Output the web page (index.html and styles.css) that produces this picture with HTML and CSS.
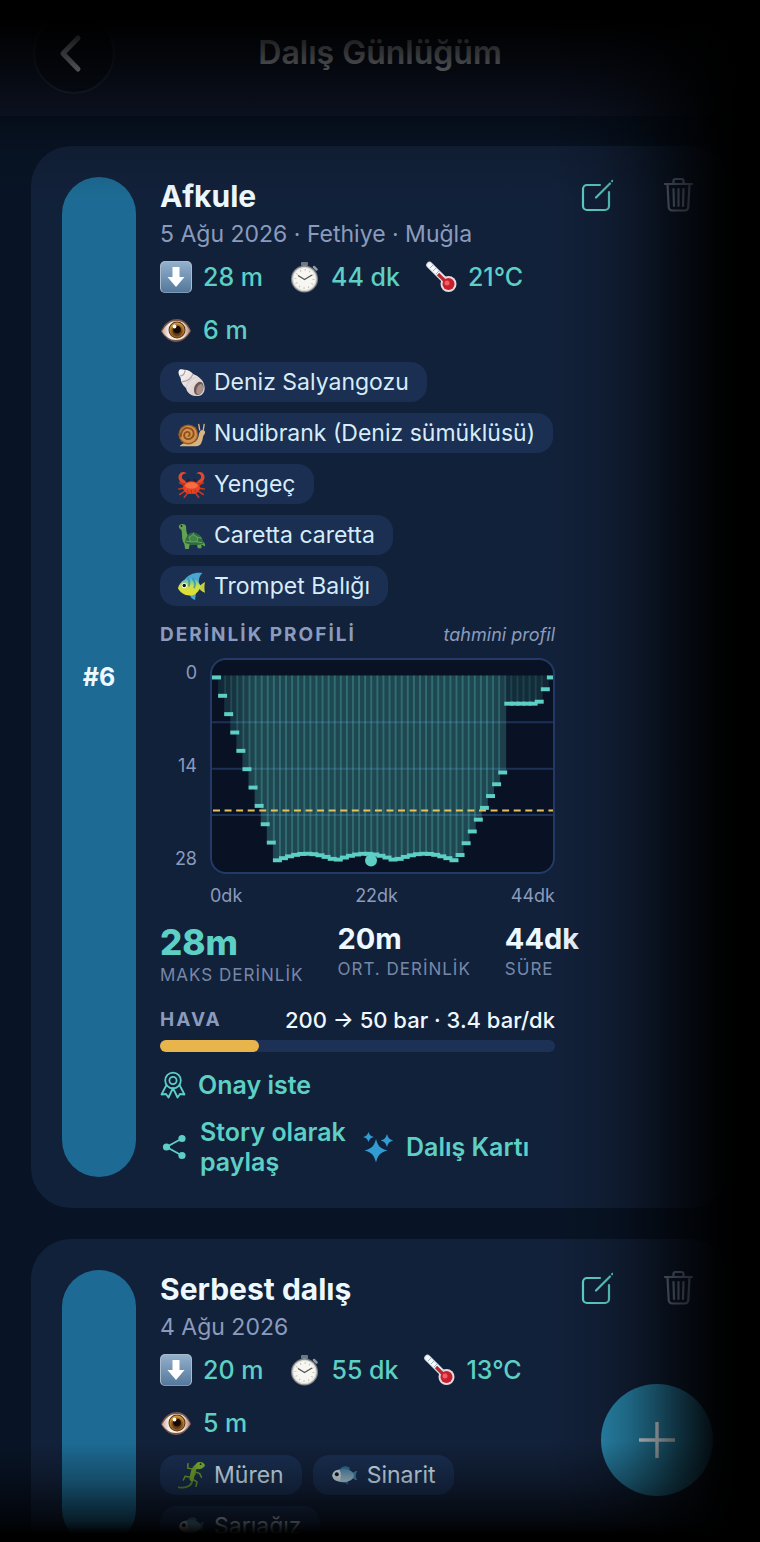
FILE: index.html
```html
<!DOCTYPE html>
<html lang="tr">
<head>
  <meta charset="UTF-8">
  <meta name="viewport" content="width=device-width, initial-scale=1">
  <title>Dalış Günlüğüm</title>
  <link rel="stylesheet" href="styles.css">
</head>
<body>
  <!-- shared icons -->
  <svg class="sprite" aria-hidden="true">
    <defs>
      <linearGradient id="gKey" x1="0" y1="0" x2="0" y2="1">
        <stop offset="0" stop-color="#93b0cb"/><stop offset="1" stop-color="#54779b"/>
      </linearGradient>
      <radialGradient id="gIris" cx=".5" cy=".6" r=".55">
        <stop offset="0" stop-color="#3a1c0c"/><stop offset=".5" stop-color="#6f4216"/><stop offset="1" stop-color="#d39a35"/>
      </radialGradient>
      <linearGradient id="gEye" x1="0" y1="0" x2="1" y2="0">
        <stop offset="0" stop-color="#c9a79c"/><stop offset=".25" stop-color="#f6f1ee"/><stop offset=".75" stop-color="#f1e9e6"/><stop offset="1" stop-color="#b3897c"/>
      </linearGradient>
      <linearGradient id="gShell" x1="0" y1="0" x2="1" y2="1">
        <stop offset="0" stop-color="#fbf7f6"/><stop offset="1" stop-color="#cfc2c2"/>
      </linearGradient>
      <linearGradient id="gFish" x1="0" y1="0" x2="0" y2="1">
        <stop offset="0" stop-color="#44b6dc"/><stop offset=".45" stop-color="#c9e04a"/><stop offset="1" stop-color="#e9dc2a"/>
      </linearGradient>
      <linearGradient id="gBlue" x1="0" y1="0" x2="0" y2="1">
        <stop offset="0" stop-color="#4d86ab"/><stop offset="1" stop-color="#b9d5e2"/>
      </linearGradient>
    </defs>
    <symbol id="i-down" viewBox="0 0 32 32">
      <rect x="0" y="0" width="32" height="32" rx="5" fill="#a9bccd"/>
      <rect x="1" y="1" width="30" height="30.500" rx="4.500" fill="url(#gKey)"/>
      <path d="M12.500 6h7v10h5L16 26 7.500 16h5z" fill="#fff"/>
    </symbol>
    <symbol id="i-watch" viewBox="0 0 32 32">
      <rect x="13" y="1" width="7" height="4" rx="1" fill="#6c7885"/>
      <path d="M16.500 4v4" stroke="#8794a2" stroke-width="3"/>
      <path d="M26 6l2.500 2.500" stroke="#8e9aa6" stroke-width="2.500" stroke-linecap="round"/>
      <circle cx="16.500" cy="18" r="13.500" fill="#7e8084"/>
      <circle cx="16.500" cy="18" r="12.300" fill="#d9d8d4"/>
      <circle cx="16.500" cy="18" r="11" fill="#f8f6f0"/>
      <circle cx="16.500" cy="18" r="9" fill="none" stroke="#b5b4b0" stroke-width="2" stroke-dasharray=".8 3.910"/>
      <path d="M10 14.500l6.500 4 7.500-4.500" fill="none" stroke="#55575a" stroke-width="1.400"/>
    </symbol>
    <symbol id="i-temp" viewBox="0 0 32 32">
      <path d="M4.500 4l18 18" stroke="#d8e3ea" stroke-width="6.500" stroke-linecap="round"/>
      <path d="M4.500 4l13 13" stroke="#f7fbfd" stroke-width="4" stroke-linecap="round"/>
      <path d="M5 7l3-3M8 10l3-3M11 13l3-3" stroke="#9bb0be" stroke-width="1"/>
      <circle cx="23.500" cy="23" r="8" fill="#e3dbe0"/>
      <path d="M13 13l9 9" stroke="#b72832" stroke-width="3.200"/>
      <circle cx="23.500" cy="23" r="6" fill="#c81f2d"/>
      <circle cx="22" cy="22" r="2.500" fill="#ee6068"/>
    </symbol>
    <symbol id="i-eye" viewBox="0 0 32 32">
      <path d="M1 17C5 8 11 5 17 5s11 4 14 12c-4 7-9 11-15 11S5 24 1 17z" fill="#7b574b"/>
      <path d="M2 17.500C6 10 11 7 17 7s10 4 13 10c-4 6-8 9-14 9S6 23 2 17.500z" fill="url(#gEye)"/>
      <circle cx="17" cy="16" r="8.500" fill="#5b3512"/>
      <circle cx="17" cy="16" r="7.500" fill="url(#gIris)"/>
      <circle cx="17" cy="15.500" r="3.800" fill="#160906"/>
      <circle cx="14.500" cy="12.500" r="1.900" fill="#fff"/>
    </symbol>
    <symbol id="i-shell" viewBox="0 0 32 32">
      <path d="M2 3c1-2 4-2 6-1 4 0 8 2 10 5 6 2 12 7 12.500 14C31 27 28 31 22 31c-7 0-11-4-12-9-4-3-6-7-6-11C2 8 1 5 2 3z" fill="url(#gShell)"/>
      <path d="M3.500 8.500c3 .5 5-2 5.500-6M5.500 15c5 0 10-3 12-8" fill="none" stroke="#b3a4a4" stroke-width="1.400"/>
      <path d="M10 22c1-5 5-10 11-12" fill="none" stroke="#d9cdcd" stroke-width="1.400"/>
      <ellipse cx="24" cy="22.500" rx="5" ry="7.500" transform="rotate(20 24 22.500)" fill="#6e5551"/>
      <ellipse cx="25" cy="23.500" rx="3.400" ry="6" transform="rotate(20 25 23.500)" fill="#a8918a"/>
    </symbol>
    <symbol id="i-snail" viewBox="0 0 32 32">
      <path d="M3 30c2-3 7-4 12-4 6 0 8-3 9-8 .5-4 2-6 4-6 3 0 4 3 2 5-2 2-1 5-3 9-1 3-3 4-6 4z" fill="#d8b484"/>
      <path d="M25 12l-1-6M29 12l1-6" stroke="#d8b484" stroke-width="1.500" stroke-linecap="round"/>
      <circle cx="12.500" cy="17" r="11" fill="#9b5a25"/>
      <circle cx="12.500" cy="17" r="9.500" fill="#d2934b"/>
      <path d="M4 20c0-7 4-11 9-10 6 1 7 8 3 11-4 3-9 0-8-4 1-3 5-4 6-1 .5 2-1 3-2 2.500" fill="none" stroke="#8e4f20" stroke-width="2"/>
    </symbol>
    <symbol id="i-crab" viewBox="0 0 32 32">
      <path d="M9 17L3 14M8 20l-6 1M9 23l-6 4M12 25l-4 5M23 17l6-3M24 20l6 1M23 23l6 4M20 25l4 5" stroke="#c9371d" stroke-width="1.800" stroke-linecap="round"/>
      <path d="M7 15C1 13 0 6 4 3c2-1.500 5-1 7 1-3-.5-5 .5-5.500 2.500C5 9 6 10 8 11l3 4zM25 15c6-2 7-9 3-12-2-1.500-5-1-7 1 3-.5 5 .5 5.500 2.500C27 9 26 10 24 11l-3 4z" fill="#e4472a"/>
      <path d="M12 13l1-3M20 13l-1-3" stroke="#3a1512" stroke-width="2"/>
      <ellipse cx="16" cy="19.500" rx="9.500" ry="7" fill="#df4526"/>
      <ellipse cx="16" cy="17" rx="7" ry="3.500" fill="#f76c40"/>
      <path d="M12 22v3M16 22v4M20 22v3" stroke="#b92f19" stroke-width="1"/>
    </symbol>
    <symbol id="i-turtle" viewBox="0 0 32 32">
      <path d="M2 6c0-3 7-4 8 0 0 6 1 10 4 12 6 1 12 1 15 5 2 2 2 3 2 5l-4-2v4h-4l-1-4h-8l-1 5H9l-1-6c-3-3-2-9-3-15-1-1-3-2-3-4z" fill="#62a352"/>
      <path d="M9 24c0-7 5-13 11-11 6 2 9 6 9 12-6 2-14 2-20-1z" fill="#2e6b3d"/>
      <path d="M13 18l5-3 5 3-1 5h-7zM23 18l4 1M22 23l6 1M15 23l-5-1M18 15v-2" fill="#3f8549" stroke="#6fa862" stroke-width="1"/>
      <circle cx="5" cy="5.500" r="1" fill="#142414"/>
    </symbol>
    <symbol id="i-tropical" viewBox="0 0 32 32">
      <path d="M8 9C12 3 19 0 28 1c-3 3-4 6-4 11zM14 25c1 3 3 5 6 6 0-3 1-6 1-9z" fill="#4aa5cf"/>
      <path d="M22 16c3 0 5-3 9-5-1 4-1 8 0 12-4-1-6-4-9-7z" fill="#c6cf3e"/>
      <path d="M1 18c1-4 5-10 12-11 8-1 12 5 13 9-2 6-6 10-12 10-6 0-11-4-13-8z" fill="url(#gFish)"/>
      <path d="M12 7c2 3 2 6 1 9M17 7c3 3 3 8 2 11" fill="none" stroke="#2687b4" stroke-width="2" opacity=".7"/>
      <circle cx="8" cy="15" r="2.800" fill="#fff"/><circle cx="8" cy="15" r="1.900" fill="#0d1420"/>
    </symbol>
    <symbol id="i-lizard" viewBox="0 0 32 32">
      <path d="M20 14c-4 3-1 9-6 13-3 2-7 3-12 2" fill="none" stroke="#5f8f27" stroke-width="2" stroke-linecap="round"/>
      <path d="M23 5c-5 2-6 8-7 15" fill="none" stroke="#74a92d" stroke-width="4.500" stroke-linecap="round"/>
      <path d="M31 5c-2 4-8 5-10 3-2-4 1-7 4-7s5 1 6 4z" fill="#82b934"/>
      <path d="M18 9l-6-1 0-5M20 12l5 2 2 4M15 18l-6-1-2 4M17 20l5 3-1 5" fill="none" stroke="#6fa52d" stroke-width="1.600" stroke-linecap="round"/>
      <circle cx="26" cy="3.500" r="1" fill="#142009"/>
    </symbol>
    <symbol id="i-fish" viewBox="0 0 32 32">
      <path d="M22 15c3-1 4-4 8-4-2 4-2 7 0 10-4 0-5-3-8-4z" fill="#3c7fae"/>
      <path d="M11 9c3-4 8-4 11-1l-2 5zM14 23l6 3-1-6z" fill="#356f99"/>
      <ellipse cx="14.500" cy="16" rx="12" ry="7.500" fill="url(#gBlue)"/>
      <path d="M2.500 16c1-5 4-6 8-6 2 4 2 8 0 12-4 0-7-1-8-6z" fill="#d7e4ea"/>
      <circle cx="7.500" cy="14.500" r="2.200" fill="#0d1824"/>
    </symbol>
    <symbol id="i-edit" viewBox="0 0 34 36">
      <g fill="none" stroke="currentColor" stroke-width="2.200" stroke-linecap="round" stroke-linejoin="round">
        <path d="M21 8H8a4 4 0 0 0-4 4v17a4 4 0 0 0 4 4h18a4 4 0 0 0 4-4V15"/>
        <path d="M17 20.500L31 6.500"/>
        <path d="M33.200 4.100l.300-.300"/>
      </g>
    </symbol>
    <symbol id="i-trash" viewBox="0 0 34 36">
      <g fill="none" stroke="currentColor" stroke-width="2.200" stroke-linecap="round" stroke-linejoin="round">
        <path d="M4 7h27M12.500 7V4a2 2 0 0 1 2-2h6a2 2 0 0 1 2 2v3"/>
        <path d="M6.500 7l1.200 23a3.500 3.500 0 0 0 3.500 3.500h12.600a3.500 3.500 0 0 0 3.500-3.500l1.200-23"/>
        <path d="M12.500 12l.5 17M17.500 12v17M22.500 12l-.5 17"/>
      </g>
    </symbol>
  </svg>

  <div class="app">
    <header class="topbar">
      <button class="back-btn" aria-label="Geri">
        <svg viewBox="0 0 24 40" width="24" height="40"><path d="M20 5L5 20.500 20 36" fill="none" stroke="currentColor" stroke-width="5" stroke-linecap="round" stroke-linejoin="round"/></svg>
      </button>
      <h1>Dalış Günlüğüm</h1>
    </header>

    <main class="dive-list">
      <article class="dive-card">
        <div class="dive-no">#6</div>
        <div class="dive-body">
          <h2>Afkule</h2>
          <p class="dive-meta">5 Ağu 2026 · Fethiye · Muğla</p>
          <div class="quick">
            <span><svg class="emoji"><use href="#i-down"/></svg>28 m</span>
            <span><svg class="emoji"><use href="#i-watch"/></svg>44 dk</span>
            <span><svg class="emoji"><use href="#i-temp"/></svg>21°C</span>
            <span><svg class="emoji"><use href="#i-eye"/></svg>6 m</span>
          </div>
          <div class="chips">
            <span class="chip"><svg class="chip-icon"><use href="#i-shell"/></svg>Deniz Salyangozu</span>
            <span class="chip"><svg class="chip-icon"><use href="#i-snail"/></svg>Nudibrank (Deniz sümüklüsü)</span>
            <span class="chip"><svg class="chip-icon"><use href="#i-crab"/></svg>Yengeç</span>
            <span class="chip"><svg class="chip-icon"><use href="#i-turtle"/></svg>Caretta caretta</span>
            <span class="chip"><svg class="chip-icon"><use href="#i-tropical"/></svg>Trompet Balığı</span>
          </div>

          <div class="profile-head">
            <span class="label-strong">DERİNLİK PROFİLİ</span>
            <em>tahmini profil</em>
          </div>
          <div class="profile">
            <div class="y-axis"><span>0</span><span>14</span><span>28</span></div>
            <div class="plot"><svg id="depthChart" viewBox="0 0 342 213" role="img" aria-label="Derinlik profili"></svg></div>
            <div class="x-axis"><span>0dk</span><span>22dk</span><span>44dk</span></div>
          </div>

          <div class="totals">
            <div class="total total-main"><b>28m</b><span>MAKS DERİNLİK</span></div>
            <div class="total"><b>20m</b><span>ORT. DERİNLİK</span></div>
            <div class="total"><b>44dk</b><span>SÜRE</span></div>
          </div>

          <div class="air-head">
            <span class="label-strong">HAVA</span>
            <span class="air-value">200 → 50 bar · 3.4 bar/dk</span>
          </div>
          <div class="air-bar"><div class="air-fill" style="width: 25%"></div></div>

          <button class="link-btn verify">
            <svg viewBox="0 0 26 28" width="26" height="28">
              <g fill="none" stroke="currentColor" stroke-width="1.800" stroke-linejoin="round">
                <circle cx="13" cy="9.500" r="7.800"/><circle cx="13" cy="9.500" r="3.600"/>
                <path d="M6.500 14L1.500 23.500l4.500-.5 2.500 3.500 4.500-9.500 4.500 9.500L20 23l4.500.5L19.500 14"/>
              </g>
            </svg>
            Onay iste
          </button>
          <div class="share-row">
            <button class="link-btn share">
              <svg viewBox="0 0 28 28" width="28" height="28">
                <path d="M22 5.500L6.500 14 22 22.500" fill="none" stroke="currentColor" stroke-width="1.800"/>
                <g fill="currentColor"><circle cx="22" cy="5.500" r="3.600"/><circle cx="6.500" cy="14" r="3.600"/><circle cx="22" cy="22.500" r="3.600"/></g>
              </svg>
              <span>Story olarak paylaş</span>
            </button>
            <button class="link-btn">
              <svg viewBox="0 0 32 32" width="32" height="32">
                <g fill="#329bd2">
                  <path d="M14 8c2 7 4 9.500 11.500 11.500C18 21.500 16 24 14 31.500 12 24 10 21.500 2.500 19.500 10 17.500 12 15 14 8z"/>
                  <path d="M25 3c1.200 4 2.300 5.200 6.300 6.500-4 1.300-5.100 2.500-6.300 6.500-1.200-4-2.300-5.200-6.300-6.500 4-1.300 5.100-2.500 6.300-6.500z"/>
                  <path d="M6.500.8c1 3.300 2 4.200 5.200 5.200-3.200 1-4.200 2-5.200 5.200C5.500 8 4.500 7 1.300 6c3.200-1 4.200-1.900 5.200-5.200z"/>
                </g>
              </svg>
              Dalış Kartı
            </button>
          </div>
        </div>
        <div class="card-actions">
          <button class="edit-btn" aria-label="Düzenle"><svg><use href="#i-edit"/></svg></button>
          <button class="trash-btn" aria-label="Sil"><svg><use href="#i-trash"/></svg></button>
        </div>
      </article>

      <article class="dive-card">
        <div class="dive-no"></div>
        <div class="dive-body">
          <h2>Serbest dalış</h2>
          <p class="dive-meta">4 Ağu 2026</p>
          <div class="quick">
            <span><svg class="emoji"><use href="#i-down"/></svg>20 m</span>
            <span><svg class="emoji"><use href="#i-watch"/></svg>55 dk</span>
            <span><svg class="emoji"><use href="#i-temp"/></svg>13°C</span>
            <span><svg class="emoji"><use href="#i-eye"/></svg>5 m</span>
          </div>
          <div class="chips">
            <span class="chip"><svg class="chip-icon"><use href="#i-lizard"/></svg>Müren</span>
            <span class="chip"><svg class="chip-icon"><use href="#i-fish"/></svg>Sinarit</span>
            <span class="chip"><svg class="chip-icon"><use href="#i-fish"/></svg>Sarıağız</span>
          </div>
        </div>
        <div class="card-actions">
          <button class="edit-btn" aria-label="Düzenle"><svg><use href="#i-edit"/></svg></button>
          <button class="trash-btn" aria-label="Sil"><svg><use href="#i-trash"/></svg></button>
        </div>
      </article>
    </main>

    <button class="fab" aria-label="Dalış ekle">
      <svg viewBox="0 0 36 36" width="36" height="36"><path d="M18 0v36M0 18h36" stroke="currentColor" stroke-width="3.400"/></svg>
    </button>
    <div class="vignette"></div>
  </div>

  <script src="script.js"></script>
</body>
</html>
```

FILE: styles.css
```css
:root {
  --bg: #081426;
  --card: #12213a;
  --chip: #1a2f52;
  --teal: #5dcfc5;
  --text: #eef8ff;
  --muted: #8b9bbd;
}
* {
  box-sizing: border-box;
}
body {
  margin: 0;
  background: #000;
  color: var(--text);
  font-family: Inter, "Noto Sans", sans-serif;
}
h1, h2, p {
  margin: 0;
}
button {
  padding: 0;
  border: none;
  background: none;
  color: inherit;
  font: inherit;
  cursor: pointer;
}
svg {
  display: block;
}
.sprite {
  position: absolute;
  width: 0;
  height: 0;
}
.app {
  position: relative;
  height: 100vh;
  overflow: hidden;
  background: var(--bg);
}

/* Top bar */
.topbar {
  display: grid;
  grid-template-columns: 82px 1fr 82px;
  align-items: center;
  padding: 12px 33px 22px;
  background: #111a30;
}
.topbar h1 {
  text-align: center;
  font-size: 32px;
  line-height: 40px;
  font-weight: 600;
}
.back-btn {
  display: flex;
  align-items: center;
  justify-content: center;
  width: 82px;
  height: 82px;
  padding-right: 8px;
  border: 2px solid #202b40;
  border-radius: 50%;
  background: #0b1220;
}

/* Dive cards */
.dive-list {
  display: flex;
  flex-direction: column;
  gap: 31px;
  padding: 30px 31px;
}
.dive-card {
  display: flex;
  flex: none;
  gap: 24px;
  padding: 31px;
  border-radius: 40px;
  background: var(--card);
}
.dive-no {
  display: flex;
  flex: none;
  align-items: center;
  justify-content: center;
  width: 74px;
  border-radius: 37px;
  background: #1d6b94;
  font-size: 25px;
  font-weight: 700;
}
.dive-body {
  flex: 1;
  min-width: 0;
}
.dive-body h2 {
  font-size: 30px;
  line-height: 38px;
  font-weight: 700;
}
.dive-meta {
  margin-top: 4px;
  font-size: 23px;
  line-height: 30px;
  color: var(--muted);
}
.quick {
  display: flex;
  flex-wrap: wrap;
  gap: 21px 25px;
  margin-top: 12px;
  font-size: 25px;
  line-height: 32px;
  font-weight: 500;
  color: var(--teal);
}
.quick span {
  display: flex;
  align-items: center;
  gap: 11px;
}
.emoji {
  width: 32px;
  height: 32px;
}
.chips {
  display: flex;
  flex-wrap: wrap;
  gap: 11px;
  margin-top: 16px;
}
.chip {
  display: flex;
  align-items: center;
  gap: 8px;
  height: 40px;
  padding: 0 18px 0 17px;
  border-radius: 16px;
  background: var(--chip);
  color: #d6ecf8;
  font-size: 23px;
  white-space: nowrap;
}
.chip-icon {
  width: 29px;
  height: 29px;
}
.card-actions {
  display: flex;
  flex: none;
  gap: 48px;
  align-items: flex-start;
  padding-right: 3px;
}
.card-actions svg {
  width: 34px;
  height: 36px;
  overflow: visible;
}
.edit-btn {
  color: #62dacf;
}
.trash-btn {
  color: #8b9bbd;
}

/* Depth profile */
.label-strong {
  font-size: 19px;
  line-height: 24px;
  font-weight: 700;
  letter-spacing: 2px;
  color: var(--muted);
}
.profile-head {
  display: flex;
  align-items: center;
  justify-content: space-between;
  margin-top: 17px;
}
.profile-head em {
  font-size: 18px;
  line-height: 24px;
  color: var(--muted);
}
.profile {
  display: grid;
  grid-template-columns: 37px 1fr;
  column-gap: 13px;
  margin-top: 11px;
  font-size: 18px;
  line-height: 22px;
  color: var(--muted);
}
.y-axis {
  display: flex;
  flex-direction: column;
  justify-content: space-between;
  padding: 4px 0;
  text-align: right;
}
.plot {
  overflow: hidden;
  border: 2px solid #233a66;
  border-radius: 16px;
  background: #081224;
}
.plot svg {
  width: 100%;
}
.bar {
  fill: var(--teal);
}
.trace {
  fill: var(--teal);
}
.grid-line {
  stroke: #1d3055;
  stroke-width: 2;
}
.avg-line {
  stroke: #e5c25c;
  stroke-width: 2;
  stroke-dasharray: 7 4.600;
}
.x-axis {
  display: flex;
  grid-column: 2;
  justify-content: space-between;
  margin-top: 11px;
}

/* Totals */
.totals {
  display: flex;
  gap: 34px;
  margin-top: 14px;
  white-space: nowrap;
}
.total b {
  display: block;
  font-size: 29px;
  line-height: 36px;
}
.total span {
  display: block;
  font-size: 17px;
  line-height: 24px;
  letter-spacing: 1px;
  color: #7787a8;
}
.total-main b {
  font-size: 35px;
  line-height: 42px;
  font-weight: 800;
  color: var(--teal);
}

/* Air usage */
.air-head {
  display: flex;
  align-items: center;
  justify-content: space-between;
  margin-top: 20px;
}
.air-value {
  font-size: 22px;
  line-height: 26px;
  font-weight: 500;
}
.air-bar {
  height: 12px;
  margin-top: 7px;
  border-radius: 6px;
  background: #1d3157;
}
.air-fill {
  height: 100%;
  border-radius: 6px;
  background: #e8b54c;
}

/* Text buttons */
.link-btn {
  display: flex;
  align-items: center;
  gap: 12px;
  color: var(--teal);
  font-size: 25px;
  line-height: 30px;
  font-weight: 600;
  text-align: left;
}
.link-btn svg {
  flex: none;
}
.verify {
  margin-top: 18px;
}
.share-row {
  display: flex;
  gap: 12px;
  margin-top: 17px;
}
.share {
  width: 190px;
}

/* Floating button */
.fab {
  position: absolute;
  right: 47px;
  bottom: 46px;
  display: flex;
  align-items: center;
  justify-content: center;
  width: 112px;
  height: 112px;
  border-radius: 50%;
  background: #2a8cb4;
}

/* Dark edges over the whole screen */
.vignette {
  position: absolute;
  inset: 0;
  pointer-events: none;
  background:
    linear-gradient(to bottom, #000 20px, rgba(0, 0, 0, .78) 55px, rgba(0, 0, 0, .4) 110px, rgba(0, 0, 0, .12) 150px, transparent 200px),
    linear-gradient(to left, #000 25px, rgba(0, 0, 0, .92) 45px, rgba(0, 0, 0, .66) 82px, rgba(0, 0, 0, .47) 105px, rgba(0, 0, 0, .27) 133px, rgba(0, 0, 0, .12) 162px, transparent 210px),
    linear-gradient(to top, #000 8px, rgba(0, 0, 0, .75) 20px, rgba(0, 0, 0, .3) 60px, transparent 100px);
}
```

FILE: script.js
```js
// depth samples in metres, one per bar
var MAX_DEPTH = 28;
var samples = [];
for (var i = 0; i < 56; i++) {
  var depth;
  if (i < 10) depth = i * 2.8;
  else if (i < 40) depth = 27.9 - Math.abs(Math.sin(Math.PI * (i - 10) / 9.67));
  else if (i < 48) depth = 27.1 - (i - 40) * 1.8;
  else if (i < 53) depth = 4;
  else depth = [3.7, 1.8, 0][i - 53];
  samples.push(depth);
}

function drawProfile(svg) {
  var ns = 'http://www.w3.org/2000/svg';
  var width = 342, top = 15.5, plotHeight = 184;
  var step = width / samples.length;

  function add(tag, attrs) {
    var el = document.createElementNS(ns, tag);
    for (var key in attrs) el.setAttribute(key, attrs[key]);
    svg.appendChild(el);
  }

  [62.5, 109, 155.5].forEach(function (y) {
    add('line', { x1: 0, x2: width, y1: y, y2: y, 'class': 'grid-line' });
  });
  samples.forEach(function (d, i) {
    add('rect', {
      x: i * step, y: top, width: 8, height: d / MAX_DEPTH * plotHeight, 'class': 'bar',
      opacity: Math.min(0.28, 0.1 + d * 0.01)
    });
  });
  samples.forEach(function (d, i) {
    add('rect', { x: i * step, y: top + d / MAX_DEPTH * plotHeight, width: 9, height: 4, 'class': 'trace' });
  });
  add('line', { x1: 1, x2: width, y1: 151, y2: 151, 'class': 'avg-line' });
  add('circle', { cx: 159.5, cy: 201, r: 6, 'class': 'trace' });
}

drawProfile(document.getElementById('depthChart'));
```
